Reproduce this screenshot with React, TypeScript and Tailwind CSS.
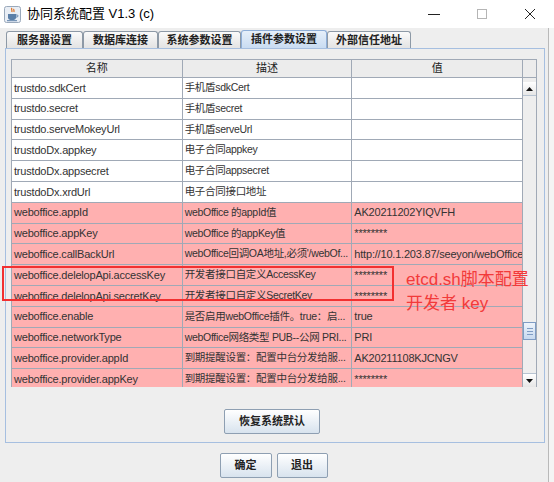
const rows = [
  { name: "trustdo.sdkCert", desc: "手机盾sdkCert", value: "", hot: false },
  { name: "trustdo.secret", desc: "手机盾secret", value: "", hot: false },
  { name: "trustdo.serveMokeyUrl", desc: "手机盾serveUrl", value: "", hot: false },
  { name: "trustdoDx.appkey", desc: "电子合同appkey", value: "", hot: false },
  { name: "trustdoDx.appsecret", desc: "电子合同appsecret", value: "", hot: false },
  { name: "trustdoDx.xrdUrl", desc: "电子合同接口地址", value: "", hot: false },
  { name: "weboffice.appId", desc: "webOffice 的appId值", value: "AK20211202YIQVFH", hot: true },
  { name: "weboffice.appKey", desc: "webOffice 的appKey值", value: "********", hot: true },
  { name: "weboffice.callBackUrl", desc: "webOffice回调OA地址,必须'/webOf...", value: "http://10.1.203.87/seeyon/webOffice", hot: true },
  { name: "weboffice.delelopApi.accessKey", desc: "开发者接口自定义AccessKey", value: "********", hot: true },
  { name: "weboffice.delelopApi.secretKey", desc: "开发者接口自定义SecretKey", value: "********", hot: true },
  { name: "weboffice.enable", desc: "是否启用webOffice插件。true：启...", value: "true", hot: true },
  { name: "weboffice.networkType", desc: "webOffice网络类型 PUB--公网 PRI...", value: "PRI", hot: true },
  { name: "weboffice.provider.appId", desc: "到期提醒设置：配置中台分发给服...", value: "AK20211108KJCNGV", hot: true },
  { name: "weboffice.provider.appKey", desc: "到期提醒设置：配置中台分发给服...", value: "********", hot: true },
];

const tabs = [
  { label: "服务器设置", w: "w-[77px]" },
  { label: "数据库连接", w: "w-[75px]" },
  { label: "系统参数设置", w: "w-[83px]" },
  { label: "插件参数设置", w: "w-[86px]" },
  { label: "外部信任地址", w: "w-[84px]" },
];

function JavaIcon() {
  return (
    <svg width="17" height="17" viewBox="0 0 17 17">
      <rect x="0.5" y="0.5" width="16" height="16" rx="2" fill="#e9eef5" stroke="#9aa9bb" />
      <path d="M8 2c-1.5 1.5 1 2.2-0.3 4M10 3c-1 1 0.8 1.6-0.2 3" stroke="#e0701e" strokeWidth="1.2" fill="none" />
      <path d="M4 8h8v3.5c0 1.5-1.2 2.5-2.5 2.5h-3C5.2 14 4 13 4 11.5z" fill="#5b7fa8" />
      <path d="M12 9h1.2c1 0 1 2-0.2 2H12" stroke="#5b7fa8" strokeWidth="1" fill="none" />
      <rect x="3" y="14.2" width="10" height="1" fill="#5b7fa8" />
    </svg>
  );
}

function JButton({ label, width }: { label: string; width: string }) {
  return (
    <button
      className={`${width} h-[25px] rounded-[2px] border border-[#8e9fb2] bg-gradient-to-b from-white to-[#d8e3ee] text-[11px] font-bold text-[#222]`}
    >
      {label}
    </button>
  );
}

export default function App() {
  return (
    <div
      className="w-[554px] h-[482px] bg-[#eeeeee] flex flex-col overflow-hidden text-[#222]"
      style={{ fontFamily: '"Liberation Sans", "Noto Sans CJK SC", sans-serif' }}
    >
      {/* title bar */}
      <div className="h-[28px] bg-white flex items-center shrink-0">
        <div className="ml-[4px] mt-[1px]">
          <JavaIcon />
        </div>
        <span className="ml-[6px] text-[13px] text-black">协同系统配置 V1.3 (c)</span>
        <div className="ml-auto flex items-center h-full">
          <div className="w-[48px] flex justify-center">
            <div className="w-[12px] h-px bg-[#222]" />
          </div>
          <div className="w-[48px] flex justify-center">
            <div className="w-[10px] h-[10px] border border-[#b5b5b5]" />
          </div>
          <div className="w-[48px] flex justify-center">
            <svg width="12" height="12" viewBox="0 0 12 12">
              <path d="M1 1L11 11M11 1L1 11" stroke="#222" strokeWidth="1" />
            </svg>
          </div>
        </div>
      </div>

      <div className="flex flex-1">
        <div className="w-[549px] border-r border-[#b9b9b9] flex flex-col">
          {/* tabs */}
          <div className="flex items-end h-[17px] mt-[3px] ml-[6px]">
            {tabs.map((t, i) => (
              <div
                key={t.label}
                className={`${t.w} ${
                  i === 3
                    ? "h-[18px] flex items-center justify-center border border-b-0 border-[#8eaed8] rounded-t-[3px] bg-gradient-to-b from-[#e6eff9] to-[#c9dcf2] text-[11px] font-bold leading-none"
                    : "h-[17px] flex items-center justify-center border border-b-0 border-[#8d99a6] rounded-t-[3px] bg-gradient-to-b from-[#fafafa] to-[#e3e3e3] text-[11px] font-bold leading-none"
                }`}
              >
                {t.label}
              </div>
            ))}
          </div>

          {/* tab panel */}
          <div className="relative ml-[5px] w-[540px] h-[395px] border border-[#a6bfe0] flex flex-col">
            <div className="ml-[5px] mt-[10px] w-[526px] h-[328px] border-l border-[#a0a9b6] flex flex-col overflow-hidden">
              {/* header */}
              <div className="flex h-[19px] shrink-0 bg-[#ececec] border-t border-b border-[#a0a9b6] text-[11px]">
                <div className="w-[171px] border-r border-[#a0a9b6] flex items-center justify-center">名称</div>
                <div className="w-[170px] border-r border-[#a0a9b6] flex items-center justify-center">描述</div>
                <div className="w-[171px] border-r border-[#a0a9b6] flex items-center justify-center">值</div>
                <div className="w-[14px] border-r border-[#a0a9b6]" />
              </div>
              {/* body */}
              <div className="flex flex-1 overflow-hidden">
                <div className="w-[512px] border-r border-[#a0a9b6] overflow-hidden">
                  {rows.map((r) => (
                    <div
                      key={r.name}
                      className={`flex h-[20.8px] border-b border-[#a0a9b6] text-[11px] tracking-[-0.2px] text-[#333] ${r.hot ? "bg-[#ffb0b0]" : "bg-white"}`}
                    >
                      <div className="w-[171px] border-r border-[#a0a9b6] pl-[2px] flex items-center whitespace-nowrap overflow-hidden">
                        {r.name}
                      </div>
                      <div className="w-[170px] border-r border-[#a0a9b6] pl-[2px] flex items-center whitespace-nowrap overflow-hidden text-[10.5px] tracking-[-0.3px]">
                        {r.desc}
                      </div>
                      <div className="w-[170px] pl-[2px] flex items-center whitespace-nowrap overflow-hidden">
                        {r.value}
                      </div>
                    </div>
                  ))}
                </div>
                {/* vertical scrollbar */}
                <div className="w-[14px] border-r border-[#a0a9b6] bg-[#eeeeee] flex flex-col">
                  <div className="h-[14px] mt-[4px] flex items-center justify-center border-b border-[#b8c4d2] bg-gradient-to-b from-white to-[#e6e6e6]">
                    <svg width="7" height="4" viewBox="0 0 7 4">
                      <path d="M0 4L3.5 0L7 4z" fill="#111" />
                    </svg>
                  </div>
                  <div className="flex-1 flex flex-col justify-end">
                    <div className="h-[18px] mb-[33px] border border-[#7f9cc4] bg-gradient-to-b from-[#eef4fb] to-[#c7d9ef] flex flex-col items-center justify-center gap-[2px]">
                      <div className="w-[6px] h-px bg-[#7f9cc4]" />
                      <div className="w-[6px] h-px bg-[#7f9cc4]" />
                      <div className="w-[6px] h-px bg-[#7f9cc4]" />
                    </div>
                  </div>
                  <div className="h-[14px] flex items-center justify-center border-t border-[#b8c4d2] bg-gradient-to-b from-white to-[#e6e6e6]">
                    <svg width="7" height="4" viewBox="0 0 7 4">
                      <path d="M0 0L3.5 4L7 0z" fill="#111" />
                    </svg>
                  </div>
                </div>
              </div>
            </div>

            <div className="flex justify-center mt-[21px]">
              <div className="ml-[-6px]">
                <JButton label="恢复系统默认" width="w-[96px]" />
              </div>
            </div>

            {/* note drawn over the table */}
            <div className="absolute left-[-4px] top-[217px] w-[392px] h-[35px] border-2 border-[#f23030]" />
            <div className="absolute left-[400px] top-[219px] text-[17px] leading-[24px] text-[#f23a3a]">
              <div>etcd.sh脚本配置</div>
              <div>开发者 key</div>
            </div>
          </div>

          {/* dialog buttons */}
          <div className="flex justify-center gap-[5px] mt-[10px] ml-[-1px]">
            <JButton label="确定" width="w-[52px]" />
            <JButton label="退出" width="w-[51px]" />
          </div>
        </div>
        <div className="flex-1 bg-[#f4f4f4]" />
      </div>
    </div>
  );
}
